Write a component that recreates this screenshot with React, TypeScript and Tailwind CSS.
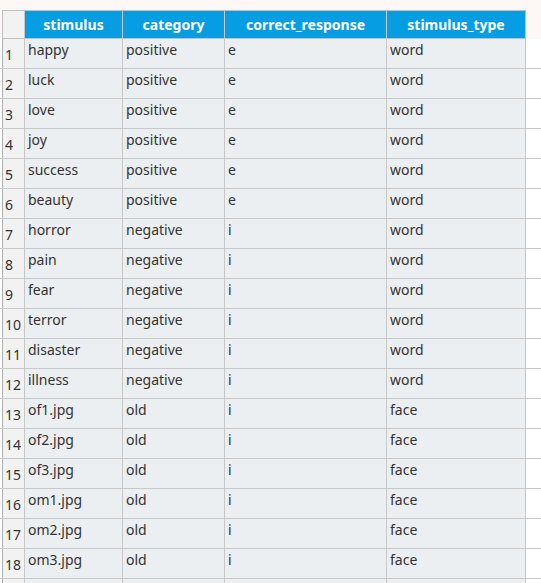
const rows = [
["happy","positive","e","word"],["luck","positive","e","word"],["love","positive","e","word"],["joy","positive","e","word"],["success","positive","e","word"],["beauty","positive","e","word"],
["horror","negative","i","word"],["pain","negative","i","word"],["fear","negative","i","word"],["terror","negative","i","word"],["disaster","negative","i","word"],["illness","negative","i","word"],
["of1.jpg","old","i","face"],["of2.jpg","old","i","face"],["of3.jpg","old","i","face"],["om1.jpg","old","i","face"],["om2.jpg","old","i","face"],["om3.jpg","old","i","face"],["","","",""]];
const W = ["w-[98px]","w-[102px]","w-[162px]","w-[139px]"];
export default function App() {
  return (
    <div className="w-[541px] h-[583px] overflow-hidden bg-white text-[14px] text-[#333]" style={{fontFamily:'"Noto Sans","DejaVu Sans",sans-serif'}}>
      <div className="h-[10px] bg-[#fdf8f6]" />
      <div className="flex h-[29px] pl-[2px] bg-[#fdf8f6]">
        <div className="w-[22px] bg-[#f2f2f2] border border-[#c0c0c0] border-r-0" />
        {["stimulus","category","correct_response","stimulus_type"].map((h,i)=>(
          <div key={h} className={`${W[i]} bg-[#069de2] text-white font-bold flex items-center justify-center border-l border-[#c8c8c8] border-y border-y-[#c0c0c0]`}>{h}</div>
        ))}
        <div className="w-px bg-[#c0c0c0]" />
      </div>
      {rows.map((r,ri)=>(
        <div key={ri} className="flex h-[30px] pl-[2px] border-b border-[#c8c8c8]">
          <div className="w-[22px] bg-[#f2f2f2] border-l border-[#b0b0b0] pl-[2px] pt-[6px] leading-[20px]">{r[0]?ri+1:""}</div>
          {r.map((c,ci)=>(
            <div key={ci} className={`${W[ci]} bg-[#eceff2] border-l border-[#c8c8c8] pl-[3px] pt-[1px] leading-[20px]`}>{c}</div>
          ))}
          <div className="w-px bg-[#c8c8c8]" />
        </div>
      ))}
    </div>
  );
}
